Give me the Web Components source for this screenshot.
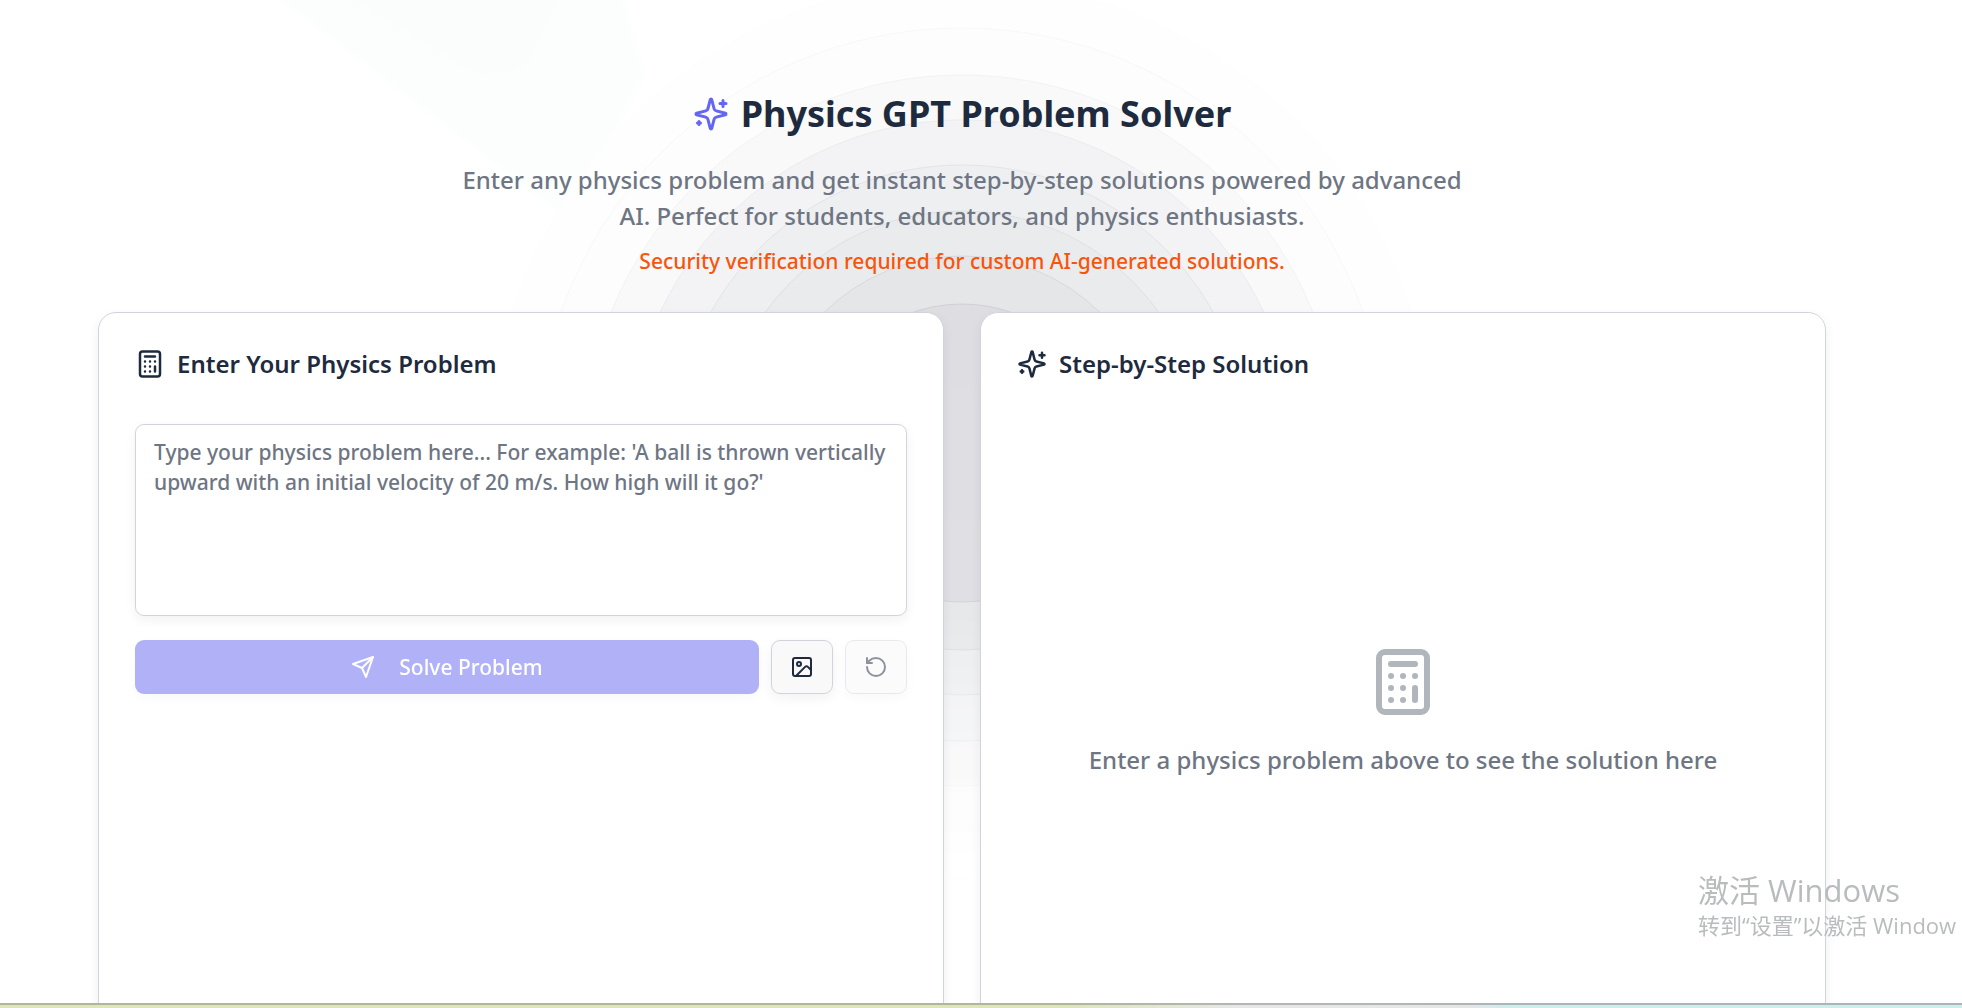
<!DOCTYPE html>
<html lang="en">
<head>
<meta charset="utf-8">
<meta name="viewport" content="width=device-width, initial-scale=1">
<title>Physics GPT Problem Solver</title>
<style>
    body {
        --ink: #1e2a3e;
        --muted: #6e7583;
        --line: #d1d5db;
        --primary: #6366f1;
        margin: 0;
        height: 100vh;
        overflow: hidden;
        background: #fff;
        color: var(--ink);
        font-family: "Noto Sans", "Noto Sans CJK SC", sans-serif;
        font-weight: 500;
    }
</style>
</head>
<body>
    <ps-page>
        <ps-hero>
            <ps-icon slot="icon" name="sparkles"></ps-icon>
            <span slot="title">Physics GPT Problem Solver</span>
            Enter any physics problem and get instant step-by-step solutions powered by advanced AI. Perfect for students, educators, and physics enthusiasts.
            <span slot="notice">Security verification required for custom AI-generated solutions.</span>
        </ps-hero>
        <ps-card>
            <ps-icon slot="icon" name="calculator"></ps-icon>
            <span slot="title">Enter Your Physics Problem</span>
            <ps-problem-form></ps-problem-form>
        </ps-card>
        <ps-card>
            <ps-icon slot="icon" name="sparkles"></ps-icon>
            <span slot="title">Step-by-Step Solution</span>
            <ps-empty>Enter a physics problem above to see the solution here</ps-empty>
        </ps-card>
    </ps-page>
    <ps-watermark>
        <span slot="title">激活 Windows</span>
        转到“设置”以激活 Window
    </ps-watermark>
    <ps-strip></ps-strip>

<script>
// Prefix for all Component Names
const prefix = 'ps';

// 24x24 stroke icons, the host element decides the size
const icons = {
    sparkles: `
        <path d="M9.937 15.5A2 2 0 0 0 8.5 14.063l-6.135-1.582a.5.5 0 0 1 0-.962L8.5 9.936A2 2 0 0 0 9.937 8.5l1.582-6.135a.5.5 0 0 1 .963 0L14.063 8.5A2 2 0 0 0 15.5 9.937l6.135 1.581a.5.5 0 0 1 0 .964L15.5 14.063a2 2 0 0 0-1.437 1.437l-1.582 6.135a.5.5 0 0 1-.963 0z"/>
        <path d="M20 3v4M22 5h-4M4 17v2M5 18H3"/>`,
    calculator: `
        <rect width="16" height="20" x="4" y="2" rx="2"/>
        <path d="M8 6h8M16 14v4M16 10h.01M12 10h.01M8 10h.01M12 14h.01M8 14h.01M12 18h.01M8 18h.01"/>`,
    send: `<path d="m22 2-7 20-4-9-9-4Z"/><path d="M22 2 11 13"/>`,
    image: `
        <rect width="18" height="18" x="3" y="3" rx="2"/>
        <circle cx="9" cy="9" r="2"/>
        <path d="m21 15-3.086-3.086a2 2 0 0 0-2.828 0L6 21"/>`,
    reset: `<path d="M3 12a9 9 0 1 0 9-9 9.75 9.75 0 0 0-6.74 2.74L3 8"/><path d="M3 3v5h5"/>`
};

class Icon extends HTMLElement {
    constructor() {
        super();
        this.attachShadow({mode: 'open'});
    }

    connectedCallback() {
        this.shadowRoot.innerHTML = `
            <style>
                :host {
                    display: block;
                    flex: none;
                    width: var(--icon-size, 24px);
                    height: var(--icon-size, 24px);
                }

                svg {
                    display: block;
                    width: 100%;
                    height: 100%;
                }
            </style>
            <svg viewBox="0 0 24 24" fill="none" stroke="currentColor" stroke-width="2"
                stroke-linecap="round" stroke-linejoin="round" aria-hidden="true">${icons[this.getAttribute('name')]}</svg>
        `;
    }
}

// Concentric circles behind the page content, fading out to the bottom
class Ripple extends HTMLElement {
    constructor() {
        super();
        this.attachShadow({mode: 'open'});

        // [radius, fill, stroke], the biggest circle first
        const rings = [
            [471, '#fefefe', '#fdfdfd'],
            [425, '#fcfdfc', '#f7f8f8'],
            [378, '#f9f9f9', '#f3f3f3'],
            [333, '#f3f3f5', '#ebecee'],
            [288, '#eeeff1', '#e3e4e7'],
            [242, '#eaebed', '#dfe0e3'],
            [197, '#e5e6e8', '#d8d9dd'],
            [149, '#dedde2', '#d0d1d6']
        ];

        this.shadowRoot.innerHTML = `
            <style>
                :host {
                    position: absolute;
                    inset: 0;
                    overflow: hidden;
                    pointer-events: none;
                }

                svg {
                    position: absolute;
                    top: 0;
                    left: 50%;
                    transform: translateX(-50%);
                }
            </style>
            <svg width="1600" height="1008" viewBox="0 0 1600 1008" aria-hidden="true">
                <defs>
                    <linearGradient id="fade" gradientUnits="userSpaceOnUse" x1="0" y1="0" x2="0" y2="940">
                        <stop offset="0" stop-color="#fff"/>
                        <stop offset=".35" stop-color="#fff"/>
                        <stop offset=".65" stop-color="#eee"/>
                        <stop offset="1" stop-color="#000"/>
                    </linearGradient>
                    <mask id="mask" maskUnits="userSpaceOnUse" x="0" y="0" width="1600" height="1008">
                        <rect width="1600" height="1008" fill="url(#fade)"/>
                    </mask>
                    <filter id="soft"><feGaussianBlur stdDeviation="4"/></filter>
                </defs>
                <path d="M90-20 333 165 422 235 440 160 484 75 458-20Z" fill="#fcfefd" filter="url(#soft)"/>
                <path d="M160-20 315 73H350L373 50 404-20Z" fill="#fafdfc" filter="url(#soft)"/>
                <g mask="url(#mask)">
                    ${rings.map(([r, fill, stroke]) => `<circle cx="800" cy="453" r="${r}" fill="${fill}" stroke="${stroke}"/>`).join('')}
                </g>
            </svg>
        `;
    }
}

class Page extends HTMLElement {
    constructor() {
        super();
        this.attachShadow({mode: 'open'});
        this.shadowRoot.innerHTML = `
            <style>
                :host {
                    display: block;
                    position: relative;
                    min-height: 100vh;
                    margin-right: 38px;
                }

                main {
                    position: relative;
                    display: grid;
                    grid-template-columns: 1fr 1fr;
                    gap: 36px;
                    max-width: 1728px;
                    margin: 0 auto;
                    padding: 90px 24px 36px;
                }

                @media (min-width: 1800px) {
                    main {
                        padding: 90px 0 36px;
                    }
                }

                ::slotted(ps-hero) {
                    grid-column: 1 / -1;
                }
            </style>
            <ps-ripple></ps-ripple>
            <main><slot></slot></main>
        `;
    }
}

class Hero extends HTMLElement {
    constructor() {
        super();
        this.attachShadow({mode: 'open'});
        this.shadowRoot.innerHTML = `
            <style>
                :host {
                    display: block;
                    text-align: center;
                }

                h1 {
                    display: flex;
                    align-items: center;
                    justify-content: center;
                    gap: 12px;
                    margin: 0 0 24px;
                    font-size: 36px;
                    line-height: 48px;
                    font-weight: 700;
                }

                ::slotted(ps-icon) {
                    --icon-size: 36px;
                    color: var(--primary);
                }

                p {
                    max-width: 1008px;
                    margin: 0 auto;
                    color: var(--muted);
                    font-size: 24px;
                    line-height: 36px;
                }

                .notice {
                    margin-top: 12px;
                    color: #f9540b;
                    font-size: 21px;
                    line-height: 30px;
                }
            </style>
            <h1><slot name="icon"></slot><slot name="title"></slot></h1>
            <p><slot></slot></p>
            <p class="notice"><slot name="notice"></slot></p>
        `;
    }
}

class Card extends HTMLElement {
    constructor() {
        super();
        this.attachShadow({mode: 'open'});
        this.shadowRoot.innerHTML = `
            <style>
                :host {
                    display: block;
                    padding: 36px;
                    border: 1px solid var(--line);
                    border-radius: 18px;
                    background: #fff;
                    box-shadow: 0 4px 12px rgba(30, 41, 59, 0.06);
                }

                h2 {
                    display: flex;
                    align-items: center;
                    gap: 12px;
                    margin: 0 0 45px;
                    font-size: 24px;
                    line-height: 30px;
                    font-weight: 600;
                }

                ::slotted(ps-icon) {
                    --icon-size: 30px;
                }
            </style>
            <h2><slot name="icon"></slot><slot name="title"></slot></h2>
            <slot></slot>
        `;
    }
}

class ProblemForm extends HTMLElement {
    constructor() {
        super();
        this.attachShadow({mode: 'open'});
        this.shadowRoot.innerHTML = `
            <style>
                :host {
                    display: block;
                }

                form {
                    display: grid;
                    gap: 24px;
                }

                textarea {
                    display: block;
                    box-sizing: border-box;
                    width: 100%;
                    height: 192px;
                    padding: 12px 18px;
                    border: 1px solid var(--line);
                    border-radius: 9px;
                    background: #fff;
                    color: inherit;
                    font: inherit;
                    font-size: 21px;
                    line-height: 30px;
                    resize: none;
                    box-shadow: 0 4px 12px rgba(30, 41, 59, 0.06);
                }

                textarea::placeholder {
                    color: var(--muted);
                    opacity: 1;
                }

                .actions {
                    display: flex;
                    gap: 12px;
                }

                button {
                    display: flex;
                    align-items: center;
                    justify-content: center;
                    box-sizing: border-box;
                    width: 62px;
                    height: 54px;
                    padding: 0;
                    border: 1px solid var(--line);
                    border-radius: 9px;
                    background: #f9f9fa;
                    color: inherit;
                    font: inherit;
                    font-size: 21px;
                    line-height: 30px;
                    box-shadow: 0 4px 12px rgba(30, 41, 59, 0.06);
                }

                button:disabled {
                    opacity: 0.5;
                }

                .solve {
                    flex: 1;
                    gap: 24px;
                    border: 0;
                    background: var(--primary);
                    color: #fff;
                }
            </style>
            <form>
                <textarea aria-label="Physics problem" placeholder="Type your physics problem here... For example: 'A ball is thrown vertically upward with an initial velocity of 20 m/s. How high will it go?'"></textarea>
                <div class="actions">
                    <button class="solve" type="submit" disabled><ps-icon name="send"></ps-icon>Solve Problem</button>
                    <button class="upload" type="button" aria-label="Upload image"><ps-icon name="image"></ps-icon></button>
                    <button type="reset" aria-label="Reset" disabled><ps-icon name="reset"></ps-icon></button>
                </div>
            </form>
        `;
    }

    connectedCallback() {
        const textarea = this.shadowRoot.querySelector('textarea');
        const solve = this.shadowRoot.querySelector('.solve');
        const reset = this.shadowRoot.querySelector('[type=reset]');

        // Nothing to solve or to reset while the text box is empty
        textarea.addEventListener('input', () => {
            solve.disabled = reset.disabled = !textarea.value.trim();
        });

        this.shadowRoot.querySelector('form').addEventListener('submit', e => e.preventDefault());
    }
}

class Empty extends HTMLElement {
    constructor() {
        super();
        this.attachShadow({mode: 'open'});
        this.shadowRoot.innerHTML = `
            <style>
                :host {
                    display: flex;
                    flex-direction: column;
                    align-items: center;
                    justify-content: center;
                    gap: 24px;
                    min-height: 576px;
                    color: var(--muted);
                    font-size: 24px;
                    line-height: 36px;
                    text-align: center;
                }

                ps-icon {
                    --icon-size: 72px;
                    color: #b0b6bb;
                }

                p {
                    margin: 0;
                }
            </style>
            <ps-icon name="calculator"></ps-icon>
            <p><slot></slot></p>
        `;
    }
}

class Watermark extends HTMLElement {
    constructor() {
        super();
        this.attachShadow({mode: 'open'});
        this.shadowRoot.innerHTML = `
            <style>
                :host {
                    position: fixed;
                    left: calc(100% - 264px);
                    bottom: 67px;
                    color: #b9bcbd;
                    font-family: "Open Sans", "Noto Sans CJK SC", sans-serif;
                    font-weight: 400;
                    white-space: nowrap;
                    pointer-events: none;
                }

                p {
                    margin: 0;
                    font-size: 22px;
                    line-height: 32px;
                }

                .title {
                    font-size: 31px;
                    line-height: 38px;
                }
            </style>
            <p class="title"><slot name="title"></slot></p>
            <p><slot></slot></p>
        `;
    }
}

// Thin coloured edge along the bottom of the window
class Strip extends HTMLElement {
    constructor() {
        super();
        this.attachShadow({mode: 'open'});
        this.shadowRoot.innerHTML = `
            <style>
                :host {
                    position: fixed;
                    inset: auto 0 0;
                }

                div {
                    height: 3px;
                    background: linear-gradient(90deg, #dde5b9 54%, #e6e7e6 63%, #e4e5e5 75%, #c9f0ed 77%);
                }

                .edge {
                    height: 2px;
                    background: linear-gradient(90deg, #b0b69c 54%, #b4b7b5 65%, #adb5b9 77%);
                }
            </style>
            <div class="edge"></div>
            <div></div>
        `;
    }
}

customElements.define(`${prefix}-icon`, Icon);
customElements.define(`${prefix}-ripple`, Ripple);
customElements.define(`${prefix}-page`, Page);
customElements.define(`${prefix}-hero`, Hero);
customElements.define(`${prefix}-card`, Card);
customElements.define(`${prefix}-problem-form`, ProblemForm);
customElements.define(`${prefix}-empty`, Empty);
customElements.define(`${prefix}-watermark`, Watermark);
customElements.define(`${prefix}-strip`, Strip);
</script>
</body>
</html>
